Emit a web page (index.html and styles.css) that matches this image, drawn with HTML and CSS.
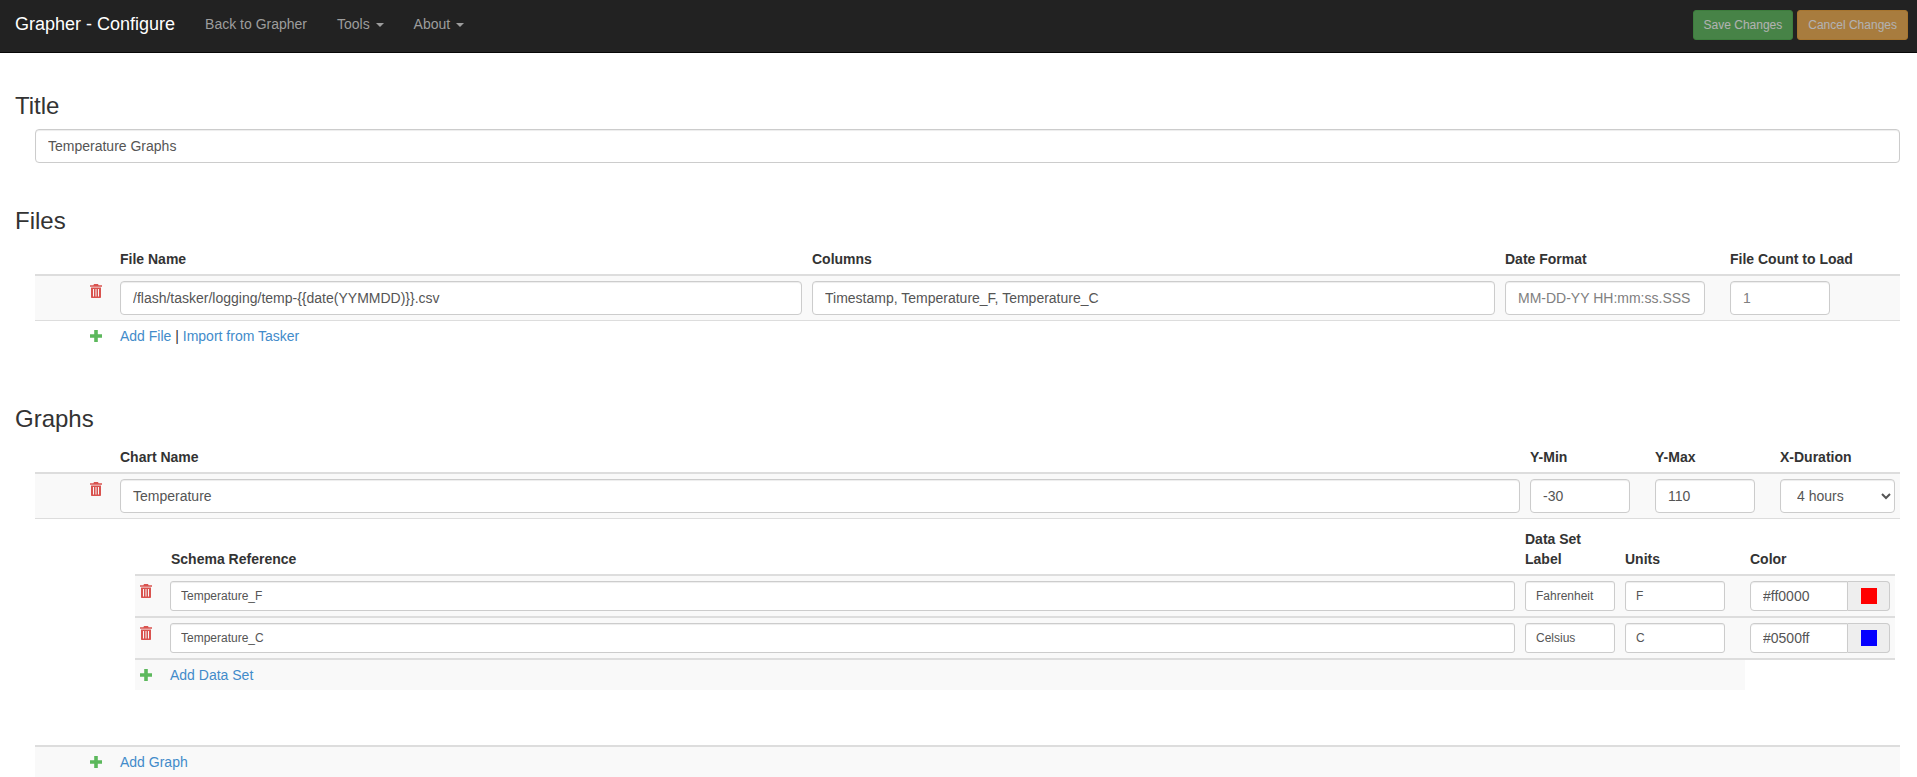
FILE: index.html
```html
<!DOCTYPE html>
<html lang="en">
<head>
<meta charset="utf-8">
<title>Grapher - Configure</title>
<link rel="stylesheet" href="styles.css">
</head>
<body>
<svg class="defs" width="0" height="0" aria-hidden="true">
  <symbol id="trash" viewBox="0 0 12 14"><path fill-rule="evenodd" d="M4 0h4l.6 1.2H12v1.6H0V1.200h3.400zM1 3.600h10V13c0 .6-.4 1-1 1H2c-.6 0-1-.4-1-1zM3 5v7.400h1V5zm2.500 0v7.400h1V5zM8 5v7.400h1V5z"/></symbol>
  <symbol id="plus" viewBox="0 0 12 12"><path d="M4.200 0h3.600v4.200H12v3.600H7.800V12H4.200V7.800H0V4.200h4.200z"/></symbol>
</svg>
<nav class="navbar">
  <a class="brand" href="#">Grapher - Configure</a>
  <ul class="nav">
    <li><a href="#">Back to Grapher</a></li>
    <li><a href="#">Tools <span class="caret"></span></a></li>
    <li><a href="#">About <span class="caret"></span></a></li>
  </ul>
  <div class="nav-actions">
    <button class="btn btn-success" disabled>Save Changes</button>
    <button class="btn btn-warning" disabled>Cancel Changes</button>
  </div>
</nav>
<main class="main">
  <section class="title-section">
    <h3>Title</h3>
    <div class="indent"><input class="field w-full" type="text" value="Temperature Graphs"></div>
  </section>

  <section class="files-section">
    <h3>Files</h3>
    <div class="indent">
      <table class="grid">
        <colgroup><col class="c85"><col class="c692"><col class="c693"><col class="c225"><col class="c170"></colgroup>
        <thead><tr><th></th><th>File Name</th><th>Columns</th><th>Date Format</th><th>File Count to Load</th></tr></thead>
        <tbody>
          <tr class="striped">
            <td class="icon-cell"><svg class="icon trash"><use href="#trash"/></svg></td>
            <td><input class="field w-682" type="text" value="/flash/tasker/logging/temp-{{date(YYMMDD)}}.csv"></td>
            <td><input class="field w-683" type="text" value="Timestamp, Temperature_F, Temperature_C"></td>
            <td><input class="field w-200" type="text" placeholder="MM-DD-YY HH:mm:ss.SSS"></td>
            <td><input class="field w-100" type="text" placeholder="1"></td>
          </tr>
        </tbody>
      </table>
      <div class="add-row">
        <span class="add-icon"><svg class="icon plus"><use href="#plus"/></svg></span>
        <span><a href="#">Add File</a> | <a href="#">Import from Tasker</a></span>
      </div>
    </div>
  </section>

  <section class="graphs-section">
    <h3>Graphs</h3>
    <div class="indent">
      <table class="grid">
        <colgroup><col class="c85"><col class="c1410"><col class="c125"><col class="c125"><col class="c120"></colgroup>
        <thead><tr><th></th><th>Chart Name</th><th>Y-Min</th><th>Y-Max</th><th>X-Duration</th></tr></thead>
        <tbody>
          <tr class="striped">
            <td class="icon-cell"><svg class="icon trash"><use href="#trash"/></svg></td>
            <td><input class="field w-1400" type="text" value="Temperature"></td>
            <td><input class="field w-100" type="text" value="-30"></td>
            <td><input class="field w-100" type="text" value="110"></td>
            <td><select class="field w-115"><option>4 hours</option></select></td>
          </tr>
          <tr>
            <td class="nested" colspan="5">
              <table class="grid sub">
                <colgroup><col class="c35"><col class="c1355"><col class="c100"><col class="c120"><col class="c150"></colgroup>
                <thead><tr><th></th><th class="schema-head">Schema Reference</th><th class="wrap-head">Data Set Label</th><th>Units</th><th class="color-cell">Color</th></tr></thead>
                <tbody>
                  <tr class="striped">
                    <td class="icon-cell"><svg class="icon trash"><use href="#trash"/></svg></td>
                    <td><input class="field small w-1345" type="text" value="Temperature_F"></td>
                    <td><input class="field small w-90" type="text" value="Fahrenheit"></td>
                    <td><input class="field small w-100" type="text" value="F"></td>
                    <td class="color-cell">
                      <div class="color-group"><input class="field color-input" type="text" value="#ff0000"><span class="addon"><i class="swatch red"></i></span></div>
                    </td>
                  </tr>
                  <tr class="striped">
                    <td class="icon-cell"><svg class="icon trash"><use href="#trash"/></svg></td>
                    <td><input class="field small w-1345" type="text" value="Temperature_C"></td>
                    <td><input class="field small w-90" type="text" value="Celsius"></td>
                    <td><input class="field small w-100" type="text" value="C"></td>
                    <td class="color-cell">
                      <div class="color-group"><input class="field color-input" type="text" value="#0500ff"><span class="addon"><i class="swatch blue"></i></span></div>
                    </td>
                  </tr>
                  <tr class="sub-add">
                    <td class="shaded"><svg class="icon plus"><use href="#plus"/></svg></td>
                    <td class="shaded" colspan="3"><a href="#">Add Data Set</a></td>
                    <td></td>
                  </tr>
                </tbody>
              </table>
            </td>
          </tr>
        </tbody>
      </table>
      <div class="add-row shaded">
        <span class="add-icon"><svg class="icon plus"><use href="#plus"/></svg></span>
        <a href="#">Add Graph</a>
      </div>
    </div>
  </section>
</main>
</body>
</html>
```
FILE: styles.css
```css
* { box-sizing: border-box; }
html, body { margin: 0; padding: 0; height: 777px; overflow: hidden; }
body { font-family: "Liberation Sans", Arial, sans-serif; font-size: 14px; line-height: 20px; color: #333; background: #fff; }
a { color: #428bca; text-decoration: none; }
.defs { position: absolute; }

.navbar { display: flex; align-items: flex-start; height: 53px; background: #222; border-bottom: 1px solid #080808; }
.brand { color: #fff; font-size: 18px; line-height: 20px; padding: 14px 15px 16px; }
.nav { display: flex; list-style: none; margin: 0; padding: 0; }
.nav a { display: block; color: #9d9d9d; padding: 14px 15px 16px; line-height: 20px; }
.caret { display: inline-block; width: 0; height: 0; margin-left: 2px; vertical-align: middle; border-top: 4px solid; border-left: 4px solid transparent; border-right: 4px solid transparent; }
.nav-actions { display: flex; gap: 4px; margin: 10px 9px 0 auto; }
.btn { font: 12px/18px "Liberation Sans", Arial, sans-serif; height: 30px; padding: 5px 10px; border: 1px solid; border-radius: 3px; color: #fff; opacity: .65; }
.btn-success { background: #5cb85c; border-color: #4cae4c; }
.btn-warning { background: #f0ad4e; border-color: #eea236; }

.main { padding: 0 17px 0 15px; }
h3 { margin: 0; font-size: 24px; line-height: 26px; font-weight: 500; color: #333; }
.indent { padding-left: 20px; }
.title-section { padding-top: 40px; }
.title-section h3 { margin-bottom: 10px; }
.files-section { padding-top: 45px; }
.files-section h3 { margin-bottom: 7px; }
.graphs-section { padding-top: 55px; }
.graphs-section h3 { margin-bottom: 7px; }

.field { display: block; height: 34px; padding: 6px 12px; font: 14px/20px "Liberation Sans", Arial, sans-serif; color: #555; background: #fff; border: 1px solid #ccc; border-radius: 4px; box-shadow: inset 0 1px 1px rgba(0,0,0,.075); }
.field::placeholder { color: #808080; opacity: 1; }
.field.small { height: 30px; padding: 5px 10px; font-size: 12px; line-height: 18px; border-radius: 3px; }
.w-full { width: 100%; }
.w-682 { width: 682px; }
.w-683 { width: 683px; }
.w-200 { width: 200px; }
.w-100 { width: 100px; }
.w-1400 { width: 1400px; }
.w-115 { width: 115px; }
.w-1345 { width: 1345px; }
.w-90 { width: 90px; }

.grid { width: 100%; table-layout: fixed; border-collapse: separate; border-spacing: 0; }
.grid th { padding: 8px 0 5px; text-align: left; vertical-align: bottom; font-weight: 700; border-bottom: 2px solid #ddd; }
.grid td { padding: 5px 0; border-bottom: 1px solid #ddd; vertical-align: top; }
.striped > td { background: #f9f9f9; }
.c35 { width: 35px; }
.c85 { width: 85px; }
.c100 { width: 100px; }
.c120 { width: 120px; }
.c125 { width: 125px; }
.c150 { width: 150px; }
.c170 { width: 170px; }
.c225 { width: 225px; }
.c692 { width: 692px; }
.c693 { width: 693px; }
.c1355 { width: 1355px; }
.c1410 { width: 1410px; }

.icon { display: block; width: 12px; }
.trash { height: 14px; fill: #d9534f; }
.plus { height: 12px; fill: #5cb85c; }
.grid td.icon-cell { padding: 8px 0 0 55px; }
.add-row { display: flex; align-items: center; height: 30px; }
.add-icon { width: 85px; padding-left: 55px; }
.shaded { background: #f9f9f9; }

.grid td.nested { padding: 2px 5px 55px 100px; border-bottom: 2px solid #ddd; }
.sub th { padding-top: 8px; }
.sub th.schema-head { padding-left: 1px; }
.sub th.wrap-head { padding-right: 20px; }
.sub th.color-cell { padding-left: 5px; }
.sub td { border-bottom: 2px solid #ddd; }
.sub td.icon-cell { padding: 8px 0 0 5px; }
.sub td.color-cell { padding-left: 5px; }
.sub .sub-add td { border-bottom: 0; height: 30px; padding: 5px 0; }
.sub .sub-add td:first-child { padding: 9px 0 0 5px; }

.color-group { display: flex; width: 140px; height: 30px; }
.color-input { width: 98px; height: 30px; padding: 4px 12px; border-radius: 4px 0 0 4px; }
.addon { display: flex; align-items: center; justify-content: center; width: 42px; background: #eee; border: 1px solid #ccc; border-left: 0; border-radius: 0 4px 4px 0; }
.swatch { display: block; width: 16px; height: 16px; }
.red { background: #f00; }
.blue { background: #0500ff; }
```
